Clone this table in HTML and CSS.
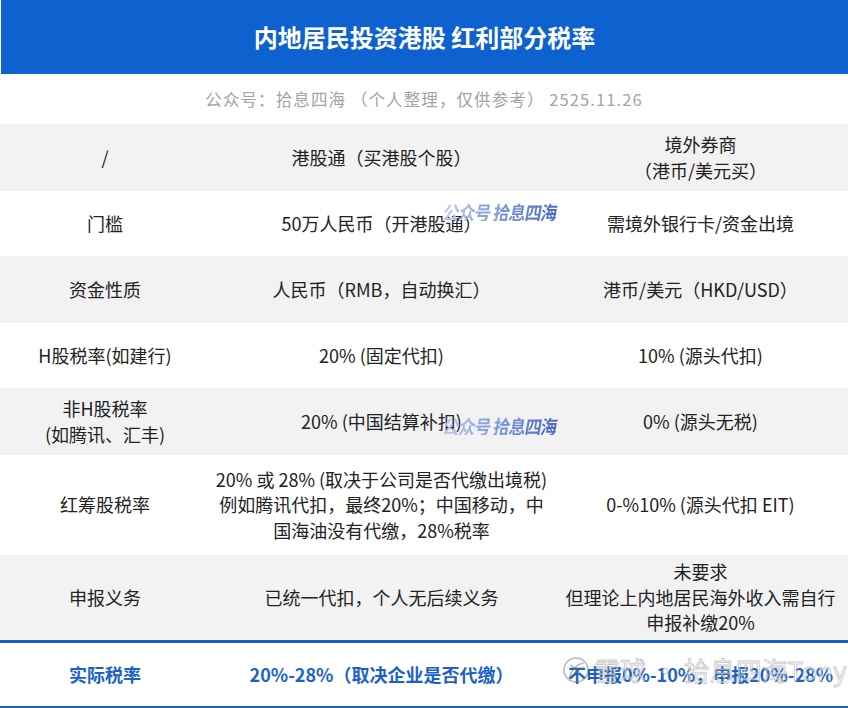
FILE: index.html
```html
<!DOCTYPE html>
<html lang="zh">
<head>
<meta charset="utf-8">
<link rel="stylesheet" href="styles.css">
</head>
<body>
<div class="page">
  <header class="hero"><h1>内地居民投资港股 红利部分税率</h1></header>
  <p class="sub">公众号：拾息四海 （个人整理，仅供参考） 2525.11.26</p>
  <div class="table">
    <div class="row gray h67">
      <div class="cell">/</div>
      <div class="cell c2">港股通（买港股个股）</div>
      <div class="cell c3">境外券商<br>（港币/美元买）</div>
    </div>
    <div class="row h65">
      <div class="cell">门槛</div>
      <div class="cell c2">50万人民币（开港股通）</div>
      <div class="cell c3">需境外银行卡/资金出境</div>
    </div>
    <div class="row gray h67">
      <div class="cell">资金性质</div>
      <div class="cell c2">人民币（RMB，自动换汇）</div>
      <div class="cell c3">港币/美元（HKD/USD）</div>
    </div>
    <div class="row h65">
      <div class="cell">H股税率(如建行)</div>
      <div class="cell c2">20% (固定代扣)</div>
      <div class="cell c3">10% (源头代扣)</div>
    </div>
    <div class="row gray h67">
      <div class="cell">非H股税率<br>(如腾讯、汇丰)</div>
      <div class="cell c2">20% (中国结算补扣)</div>
      <div class="cell c3">0% (源头无税)</div>
    </div>
    <div class="row h100">
      <div class="cell">红筹股税率</div>
      <div class="cell c2">20% 或 28% (取决于公司是否代缴出境税)<br>例如腾讯代扣，最终20%；中国移动，中<br>国海油没有代缴，28%税率</div>
      <div class="cell c3">0-%10% (源头代扣 EIT)</div>
    </div>
    <div class="row gray h85">
      <div class="cell">申报义务</div>
      <div class="cell c2">已统一代扣，个人无后续义务</div>
      <div class="cell c3">未要求<br>但理论上内地居民海外收入需自行<br>申报补缴20%</div>
    </div>
    <div class="row total">
      <div class="cell">实际税率</div>
      <div class="cell c2">20%-28%（取决企业是否代缴）</div>
      <div class="cell c3">不申报0%-10%，申报20%-28%</div>
    </div>
  </div>

  <div class="wm wm-a">公众号 拾息四海</div>
  <div class="wm wm-b">公众号 拾息四海</div>
  <div class="xq">
    <svg class="xq-logo" width="28" height="28" viewBox="0 0 28 28">
      <circle cx="14" cy="14" r="12" fill="none" stroke="rgba(110,110,110,0.5)" stroke-width="1.6"/>
      <path d="M8 20 C10 13 14 9 21 7 M10 21 C13 16 17 13 21 12 M9 9 L19 19" fill="none" stroke="rgba(110,110,110,0.5)" stroke-width="1.5" stroke-linecap="round"/>
    </svg>
    <span>雪球 · 拾息四海Tony</span>
  </div>
</div>
</body>
</html>
```

FILE: styles.css
```css
* { box-sizing: border-box; }
html, body { margin: 0; padding: 0; background: #ffffff; }
body {
  font-family: "Noto Sans CJK SC", "Noto Sans", sans-serif;
  color: #222222;
}
.page {
  position: relative;
  width: 848px;
  height: 708px;
  overflow: hidden;
  background: #ffffff;
}
.hero {
  height: 74px;
  margin-left: 1px;
  background: #0d62cf;
  display: flex;
  align-items: center;
  justify-content: center;
}
.hero h1 {
  margin: 0;
  color: #ffffff;
  font-size: 24px;
  font-weight: 700;
  line-height: 1;
}
.sub {
  margin: 0;
  height: 50px;
  display: flex;
  align-items: center;
  justify-content: center;
  color: #a3a3a3;
  font-size: 16.5px;
  letter-spacing: 1.1px;
}
.table { display: flex; flex-direction: column; }
.row {
  display: grid;
  grid-template-columns: 210px 343px 295px;
  background: #ffffff;
}
.row.gray { background: #f2f2f2; }
.h65 { height: 65px; }
.h67 { height: 67px; }
.h85 { height: 85px; }
.h100 { height: 100px; }
.cell {
  display: flex;
  align-items: center;
  justify-content: center;
  text-align: center;
  font-size: 18px;
  line-height: 25.5px;
  white-space: nowrap;
}
.row.total {
  height: 68px;
  border-top: 3px solid #1a5fc0;
  border-bottom: 2px solid #1a5fc0;
}
.row.total .cell {
  color: #1b62c6;
  font-weight: 700;
}
.wm {
  position: absolute;
  font-size: 19px;
  font-weight: 700;
  line-height: 1;
  letter-spacing: -1px;
  transform-origin: left top;
  transform: skewX(-10deg) scaleX(0.88);
  background: linear-gradient(90deg, #c3cff0 0%, #8ea4e0 35%, #4a68c4 100%);
  -webkit-background-clip: text;
  background-clip: text;
  color: transparent;
}
.wm-a { left: 445px; top: 202px; }
.wm-b { left: 445px; top: 416px; }
.xq {
  position: absolute;
  left: 562px;
  top: 656px;
  display: flex;
  align-items: center;
  gap: 4px;
}
.xq span {
  font-size: 26px;
  line-height: 1;
  color: rgba(255, 255, 255, 0.55);
  -webkit-text-stroke: 1px rgba(120, 120, 120, 0.4);
}
```
